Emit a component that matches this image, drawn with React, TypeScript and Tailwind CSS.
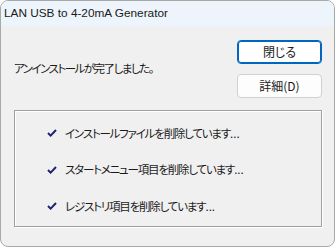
import React from "react";

const jp = { fontFamily: '"Noto Sans CJK JP", "Noto Sans", sans-serif' } as React.CSSProperties;

function Check() {
  return (
    <svg width="10" height="8" viewBox="0 0 10 8" className="shrink-0">
      <path d="M1 4 L3.6 6.6 L9 1" fill="none" stroke="#1f2270" strokeWidth="2" />
    </svg>
  );
}

const items = [
  "インストールファイルを削除しています",
  "スタートメニュー項目を削除しています",
  "レジストリ項目を削除しています",
];

export default function App() {
  return (
    <div className="w-[336px] h-[248px] bg-white">
      <div className="w-[335px] h-[247px] border border-[#a9a9a9] rounded-[8px] overflow-hidden flex flex-col bg-[#f0f0f0]">
        <div
          className="h-[25px] bg-[#eef4fb] pl-[3px] flex items-center text-[11.8px] text-[#1a1a1a]"
          style={{ fontFamily: '"Liberation Sans", Arial, sans-serif' }}
        >
          LAN USB to 4-20mA Generator
        </div>
        <div className="flex-1 px-[12px] pt-[14px] [font-feature-settings:'palt']" style={jp}>
          <div className="flex items-center justify-between">
            <div className="text-[11.5px] tracking-[-1.5px] text-[#1a1a1a] pl-[1px] [font-feature-settings:'palt']">
              アンインストールが完了しました。
            </div>
            <div className="flex flex-col gap-[10px]">
              <button className="w-[85px] h-[24px] bg-white border border-[#0067c0] rounded-[4px] text-[12px] text-[#1a1a1a] shadow-[inset_0_0_0_1px_#0067c0]">
                閉じる
              </button>
              <button className="w-[85px] h-[24px] bg-[#fdfdfd] border border-[#d0d0d0] rounded-[4px] text-[12px] text-[#1a1a1a]">
                詳細(D)
              </button>
            </div>
          </div>
          <div className="mt-[12px] ml-[1px] h-[117px] border border-[#a0a0a0] shadow-[1px_1px_0_#ffffff,inset_1px_1px_0_#ffffff] pt-[4px] pl-[32px]">
            {items.map((t) => (
              <div key={t} className="h-[36.5px] flex items-center gap-[8px] text-[#1a1a1a]">
                <Check />
                <span className="text-[11.5px] [font-feature-settings:'palt']">
                  <span className="tracking-[-1.2px]">{t}</span>
                  <span className="tracking-[0px]">...</span>
                </span>
              </div>
            ))}
          </div>
        </div>
      </div>
    </div>
  );
}
